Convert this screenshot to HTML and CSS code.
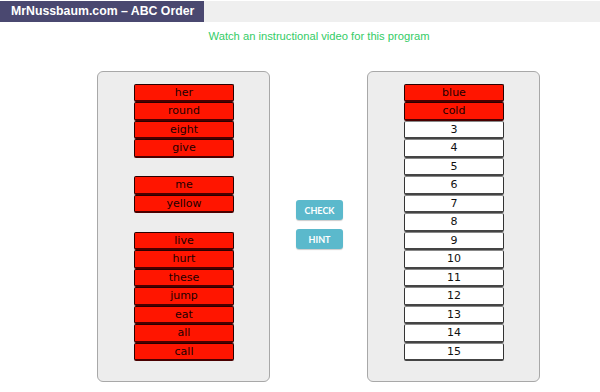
FILE: index.html
```html
<!DOCTYPE html>
<html lang="en">
<head>
  <meta charset="UTF-8">
  <title>ABC Order</title>
  <link rel="stylesheet" href="styles.css">
</head>
<body>
  <div class="topbar">
    <div class="title">MrNussbaum.com – ABC Order</div>
  </div>
  <p class="video-link">Watch an instructional video for this program</p>

  <div class="game">
    <div class="panel">
      <div class="group">
        <div class="word">her</div>
        <div class="word">round</div>
        <div class="word">eight</div>
        <div class="word">give</div>
      </div>
      <div class="group">
        <div class="word">me</div>
        <div class="word">yellow</div>
      </div>
      <div class="group">
        <div class="word">live</div>
        <div class="word">hurt</div>
        <div class="word">these</div>
        <div class="word">jump</div>
        <div class="word">eat</div>
        <div class="word">all</div>
        <div class="word">call</div>
      </div>
    </div>

    <div class="controls">
      <button class="btn">CHECK</button>
      <button class="btn">HINT</button>
    </div>

    <div class="panel">
      <div class="group">
        <div class="word">blue</div>
        <div class="word">cold</div>
        <div class="word slot">3</div>
        <div class="word slot">4</div>
        <div class="word slot">5</div>
        <div class="word slot">6</div>
        <div class="word slot">7</div>
        <div class="word slot">8</div>
        <div class="word slot">9</div>
        <div class="word slot">10</div>
        <div class="word slot">11</div>
        <div class="word slot">12</div>
        <div class="word slot">13</div>
        <div class="word slot">14</div>
        <div class="word slot">15</div>
      </div>
    </div>
  </div>
</body>
</html>
```

FILE: styles.css
```css
* {
  margin: 0;
  padding: 0;
  box-sizing: border-box;
}

body {
  font-family: 'Liberation Sans', Arial, sans-serif;
  background: #fff;
  width: 600px;
  height: 392px;
  overflow: hidden;
}

.topbar {
  margin-top: 1px;
  height: 21px;
  background: #efefef;
}

.title {
  width: 204px;
  height: 21px;
  background: #4a4870;
  color: #fff;
  font-weight: bold;
  font-size: 12.3px;
  line-height: 21px;
  padding-left: 11px;
  white-space: nowrap;
}

.video-link {
  margin-top: 7px;
  text-align: center;
  padding-left: 38px;
  color: #33cc66;
  font-size: 11.2px;
  line-height: 14px;
}

.game {
  display: flex;
  align-items: flex-start;
  margin-top: 28px;
  padding-left: 97px;
}

.panel {
  width: 173px;
  height: 311px;
  background: #ededed;
  border: 1px solid #a8a8a8;
  border-radius: 6px;
  padding: 12px 0 0 36px;
}

.group {
  width: 100px;
  margin-bottom: 18.5px;
}

.word {
  height: 18.47px;
  background: #ff1500;
  border: 1px solid #2a0000;
  border-bottom: 2px solid #4a0000;
  border-radius: 2px;
  color: #200;
  font-family: 'DejaVu Sans', sans-serif;
  font-size: 11px;
  line-height: 15px;
  text-align: center;
}

.slot {
  background: #fff;
  border-color: #333;
  border-top-color: #888;
  border-bottom-color: #444;
  color: #111;
}

.controls {
  display: flex;
  flex-direction: column;
  gap: 9px;
  margin: 129px 24px 0 26px;
}

.btn {
  width: 47px;
  height: 20px;
  border: none;
  border-radius: 3px;
  background: #5bb9cc;
  box-shadow: 0 1px 1px rgba(0, 0, 0, 0.2);
  color: #fff;
  font-family: 'Lato', sans-serif;
  font-weight: bold;
  font-size: 9px;
}
```
